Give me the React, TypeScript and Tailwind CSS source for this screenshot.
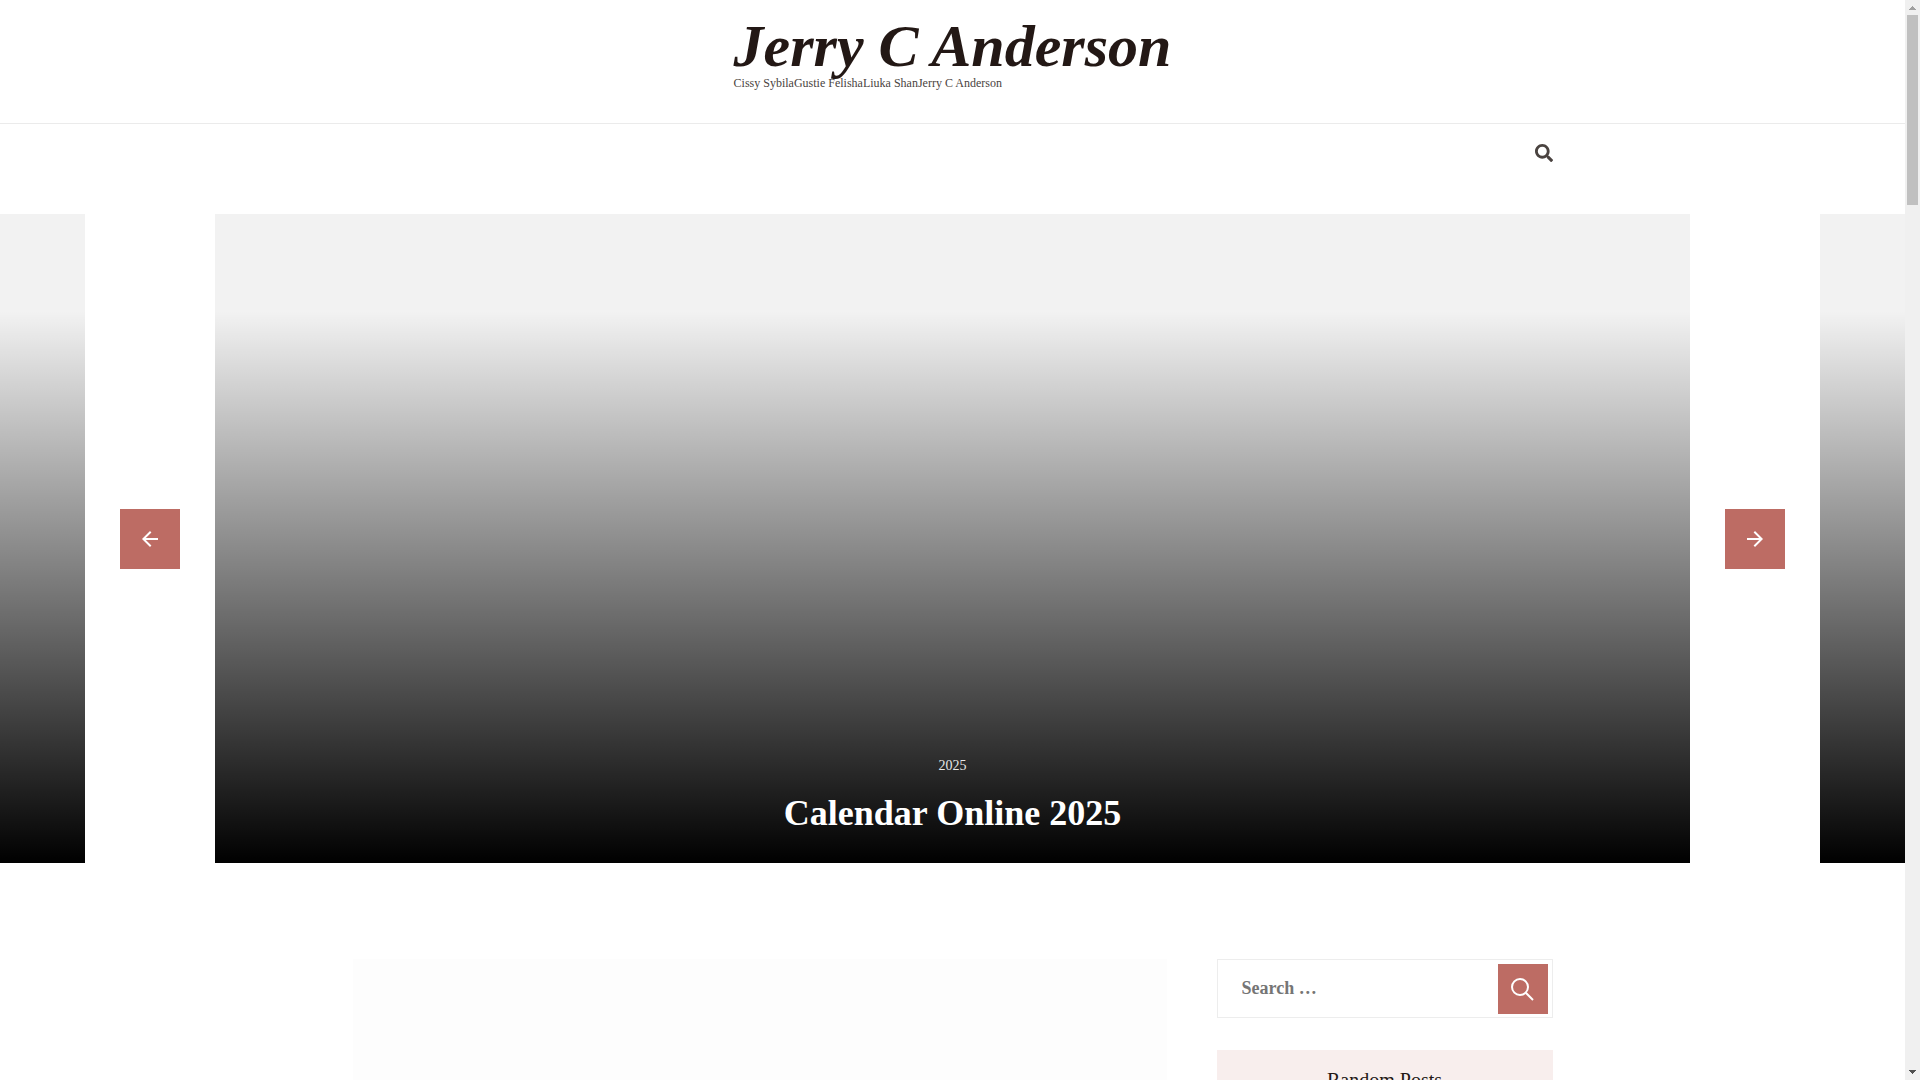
import { FaSearch } from 'react-icons/fa'
import { MdArrowBack, MdArrowForward } from 'react-icons/md'

type Slide = {
  category: string
  title: string
}

const slides: Slide[] = [
  { category: '2025', title: 'Printable Calendar 2025' },
  { category: '2025', title: 'Calendar Online 2025' },
  { category: '2025', title: 'Monthly Calendar 2025' },
]

const ACTIVE_SLIDE = 1

function SiteHeader() {
  return (
    <header>
      <div className="flex justify-center border-b border-[#ebebeb] pt-4 pb-8">
        <div>
          <h1 className="text-[60px] leading-[60px] font-bold text-[#231815] italic">
            <a href="#">Jerry C Anderson</a>
          </h1>
          <p className="text-xs leading-[15px] text-[#4a4340]">
            Cissy SybilaGustie FelishaLiuka ShanJerry C Anderson
          </p>
        </div>
      </div>
      <nav className="mx-auto flex h-[58px] max-w-[1200px] items-center justify-end">
        <button type="button" aria-label="Open search" className="text-lg text-[#4a4340]">
          <FaSearch />
        </button>
      </nav>
    </header>
  )
}

function SlideCard({ slide, active }: { slide: Slide; active: boolean }) {
  return (
    <article
      aria-hidden={!active}
      className="flex aspect-[25/11] w-[calc(100%-430px)] shrink-0 flex-col items-center justify-end gap-[11px] bg-[#f2f2f2] bg-[linear-gradient(180deg,rgba(0,0,0,0)_15%,#000_100%)] pb-6 text-white"
    >
      {active && (
        <>
          <a href="#" className="text-sm text-[#e8e8e8]">
            {slide.category}
          </a>
          <h2 className="text-4xl leading-[52px] font-bold">
            <a href="#">{slide.title}</a>
          </h2>
        </>
      )}
    </article>
  )
}

function Carousel() {
  return (
    <section className="relative mt-8">
      <div className="flex justify-center gap-[130px] overflow-hidden">
        {slides.map((slide, i) => (
          <SlideCard key={slide.title} slide={slide} active={i === ACTIVE_SLIDE} />
        ))}
      </div>
      <button
        type="button"
        aria-label="Previous slide"
        className="absolute top-1/2 left-[120px] flex size-[60px] -translate-y-1/2 items-center justify-center bg-[#bd6c64] text-2xl text-white"
      >
        <MdArrowBack />
      </button>
      <button
        type="button"
        aria-label="Next slide"
        className="absolute top-1/2 right-[120px] flex size-[60px] -translate-y-1/2 items-center justify-center bg-[#bd6c64] text-2xl text-white"
      >
        <MdArrowForward />
      </button>
    </section>
  )
}

function SearchForm() {
  return (
    <form role="search" className="flex items-start border border-[#ededed] p-1 pb-[3px]">
      <input
        type="search"
        aria-label="Search"
        placeholder="Search …"
        className="h-12 min-w-0 flex-1 px-5 text-lg font-bold outline-none placeholder:text-[#757575]"
      />
      <button
        type="submit"
        aria-label="Search"
        className="flex size-[50px] items-center justify-center bg-[#bd6c64] text-white"
      >
        <svg width="24" height="24" viewBox="0 0 24 24" fill="none" stroke="currentColor" strokeWidth="2">
          <circle cx="9" cy="10" r="8" />
          <path d="M14.8 15.8 22 23" />
        </svg>
      </button>
    </form>
  )
}

function Sidebar() {
  return (
    <aside className="w-[336px] shrink-0">
      <SearchForm />
      <section className="mt-8 bg-[#f8eeed] py-4">
        <h2 className="text-center text-xl leading-7 text-[#231815]">Random Posts</h2>
      </section>
    </aside>
  )
}

function ScrollRail() {
  return (
    <div aria-hidden="true" className="flex w-[15px] shrink-0 flex-col items-center bg-[#f0f0f0]">
      <svg className="h-[15px] w-[15px] shrink-0" viewBox="0 0 15 15" fill="#a0a0a0">
        <path d="M7 6h1v1h1v1h1v1h1v1H4V9h1V8h1V7h1z" />
      </svg>
      <div className="h-[190px] w-[11px] bg-[#c0c0c0]" />
      <svg className="mt-auto h-[15px] w-[15px] shrink-0" viewBox="0 0 15 15" fill="#505050">
        <path d="M4 5h7v1h-1v1H9v1H8v1H7V8H6V7H5V6H4z" />
      </svg>
    </div>
  )
}

export default function App() {
  return (
    <div className="flex h-screen overflow-hidden bg-white font-['Liberation_Serif',serif]">
      <div className="min-w-0 flex-1 overflow-hidden">
        <SiteHeader />
        <Carousel />
        <div className="mx-auto mt-24 flex max-w-[1200px] gap-[50px]">
          <main className="min-h-[540px] flex-1 bg-[#fdfdfd]" />
          <Sidebar />
        </div>
      </div>
      <ScrollRail />
    </div>
  )
}
